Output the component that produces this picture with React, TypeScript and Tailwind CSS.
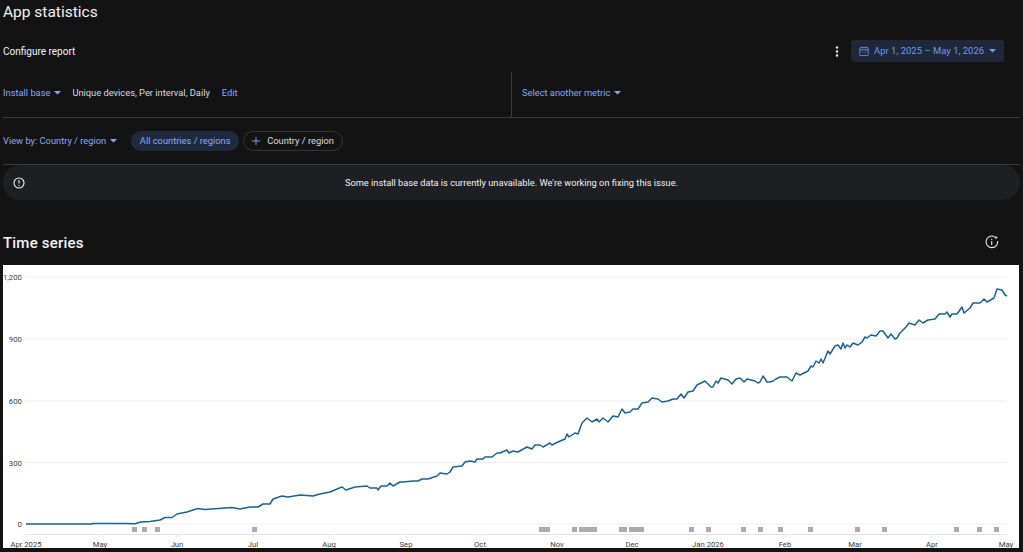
const font = { fontFamily: "Roboto, 'Liberation Sans', sans-serif" };

const linePoints = "26,524 60,524 92,524 93,523.4 125,523.5 135,523.8 141,522 150,521.5 160,520 165,517.5 172,517.5 177,514 187,512 193,510 198,508.5 205,509.5 225,508 232,507.5 240,509 250,507 258,507 263,504 270,504 273,499 282,496 288,497 300,495 313,496 320,494 330,492 342,487 346,490 355,487 367,486 370,488 377,488 378,490 381,486 387,486 390,483 393,486 400,482 403,482 413,481 418,481 422,479 428,479 437,476 440,473 447,474 450,472 453,467 462,466 465,462 470,461 475,462 477,459 483,459 485,457 492,457 497,453 500,453 507,450 509,453 513,451 518,452 527,447 532,449 535,445 540,445 543,447 550,443 552,445 558,442 565,439 567,434 569,437 575,433 578,434 582,423 587,418 592,422 597,419 599,422 603,418 608,422 613,416 618,417 622,409 625,413 630,412 633,409 638,409 642,403 648,402 652,398 658,399 662,402 668,401 673,399 677,399 681,394 684,398 688,392 693,391 697,385 705,381 711,387 713,387 716,381 718,383 721,378 728,380 732,384 736,379 740,378 744,382 747,379 755,381 758,383 760,382 763,376 767,382 770,382 773,381 776,379 780,377 787,377 792,381 796,373 800,375 808,371 811,366 813,367 816,361 819,363 821,359 823,363 828,351 830,354 835,346 838,345 841,349 843,343 845,348 847,345 850,347 853,343 858,345 862,342 865,337 867,338 871,335 876,336 880,331 883,331 888,338 891,334 895,339 897,338 900,333 906,327 909,323 915,325 919,320 923,323 928,320 935,319 939,314 945,314 947,312 950,317 952,314 957,314 962,307 964,313 970,308 973,303 980,303 984,299 987,302 994,298 997,289 1002,290 1005,295 1007,296";

const gridLines = [
  { y: 277, label: "1,200" },
  { y: 339, label: "900" },
  { y: 401, label: "600" },
  { y: 462.5, label: "300" },
  { y: 524, label: "0" },
];

const ticks = [
  { x: 26, label: "Apr 2025" },
  { x: 100, label: "May" },
  { x: 177, label: "Jun" },
  { x: 253, label: "Jul" },
  { x: 329, label: "Aug" },
  { x: 406, label: "Sep" },
  { x: 480, label: "Oct" },
  { x: 557, label: "Nov" },
  { x: 632, label: "Dec" },
  { x: 708, label: "Jan 2026" },
  { x: 785, label: "Feb" },
  { x: 855, label: "Mar" },
  { x: 932, label: "Apr" },
  { x: 1006, label: "May" },
];

const marks = [
  [132, 5], [142, 5], [155, 5], [252, 5], [539, 11], [572, 5], [579, 18], [619, 8], [629, 15],
  [689, 5], [706, 5], [741, 5], [758, 5], [778, 5], [808, 5], [855, 5], [882, 5], [954, 5], [977, 5], [994, 5],
];

function Caret({ className }: { className: string }) {
  return (
    <svg viewBox="0 0 8 4" className={`w-[7px] h-[3.5px] ${className}`} fill="currentColor">
      <path d="M0 0h8L4 4z" />
    </svg>
  );
}

function Chart() {
  return (
    <svg viewBox="3 265 1016 283" className="w-[1016px] h-[283px] block" style={font}>
      {gridLines.map((g) => (
        <g key={g.label}>
          <line x1="25" x2="1007" y1={g.y} y2={g.y} stroke="#eeeeee" strokeWidth="1" />
          <text x="22" y={g.y + 3} textAnchor="end" fontSize="7.8" fill="#3c4043">{g.label}</text>
        </g>
      ))}
      {marks.map(([x, w]) => (
        <rect key={x} x={x} y="527" width={w} height="5" fill="#ababab" />
      ))}
      <line x1="25" x2="1007" y1="534.5" y2="534.5" stroke="#e3e3ea" strokeWidth="1" />
      {ticks.map((t) => (
        <g key={t.x}>
          <line x1={t.x} x2={t.x} y1="534" y2="537" stroke="#e3e3ea" strokeWidth="1" />
          <text x={t.x} y="546.5" textAnchor="middle" fontSize="7.7" fill="#3c4043">{t.label}</text>
        </g>
      ))}
      <polyline points={linePoints} fill="none" stroke="#1a6396" strokeWidth="1.5" strokeLinejoin="round" />
    </svg>
  );
}

export default function App() {
  return (
    <div className="w-[1023px] h-[552px] overflow-hidden bg-[#131314] text-[#e8eaed] px-[3px]" style={font}>
      <h1 className="h-[24px] pt-[1px] flex items-center text-[15.5px] text-[#f1f3f4]">App statistics</h1>

      <div className="h-[48px] mt-[3px] flex items-center pr-[15px]">
        <span className="text-[10px] text-[#f1f3f4]">Configure report</span>
        <svg viewBox="0 0 4 12" className="ml-auto w-[4px] h-[11px] text-[#e8eaed]" fill="currentColor">
          <circle cx="2" cy="1.6" r="1.3" />
          <circle cx="2" cy="6" r="1.3" />
          <circle cx="2" cy="10.4" r="1.3" />
        </svg>
        <button className="ml-[12px] mr-[1px] w-[153px] h-[22px] rounded-[3px] bg-[#1f2738] text-[#6f9bf0] text-[9.5px] flex items-center pl-[8px] pr-[8px]">
          <svg viewBox="0 0 12 12" className="w-[10px] h-[10px] mr-[5px] shrink-0" fill="none" stroke="currentColor" strokeWidth="1">
            <rect x="1" y="2" width="10" height="9.5" rx="0.8" />
            <path d="M1 4.6h10M3.5 0.5v2M8.5 0.5v2M3.5 7.5h1M5.6 7.5h1M7.7 7.5h1" />
          </svg>
          <span className="whitespace-nowrap">Apr 1, 2025 – May 1, 2026</span>
          <Caret className="ml-auto" />
        </button>
      </div>

      <div className="h-[46px] mt-[-3px] flex border-b border-[#3a3b3d] text-[9.3px]">
        <div className="w-[509px] flex items-center border-r border-[#3a3b3d] pb-[3px]">
          <span className="text-[#8fa8f5]">Install base</span>
          <Caret className="ml-[4px] text-[#8fa8f5]" />
          <span className="ml-[11px] text-[#dadce0]">Unique devices, Per interval, Daily</span>
          <span className="ml-[12px] text-[#8fa8f5]">Edit</span>
        </div>
        <div className="flex items-center pl-[10px] pb-[3px]">
          <span className="text-[#8fa8f5]">Select another metric</span>
          <Caret className="ml-[4px] text-[#8fa8f5]" />
        </div>
      </div>

      <div className="h-[47px] flex items-center border-b border-[#3a3b3d] text-[9.3px]">
        <span className="text-[#8fa8f5]">View by: Country / region</span>
        <Caret className="ml-[4px] text-[#8fa8f5]" />
        <span className="ml-[14px] w-[108px] h-[20px] rounded-full bg-[#1f2a3f] text-[#8fa8f5] flex items-center justify-center">All countries / regions</span>
        <span className="ml-[4px] w-[100px] h-[20px] rounded-full border border-[#333436] text-[#dadce0] flex items-center pl-[8px]">
          <svg viewBox="0 0 8 8" className="w-[8px] h-[8px] mr-[7px] text-[#6f9bf0]" fill="none" stroke="currentColor" strokeWidth="1">
            <path d="M4 0v8M0 4h8" />
          </svg>
          Country / region
        </span>
      </div>

      <div className="h-[35px] rounded-[17px] bg-[#1e1f22] flex items-center relative text-[9.25px] text-[#f1f3f4]">
        <svg viewBox="0 0 12 12" className="absolute left-[10px] w-[12px] h-[12px]" fill="none" stroke="currentColor" strokeWidth="1.1">
          <circle cx="6" cy="6" r="5" />
          <path d="M6 3v3.6M6 8v1" />
        </svg>
        <span className="w-full text-center">Some install base data is currently unavailable. We're working on fixing this issue.</span>
      </div>

      <div className="h-[65px] flex items-center pr-[21px] pt-[21px]">
        <h2 className="text-[15px] font-medium text-[#f1f3f4] tracking-[0.2px]">Time series</h2>
        <svg viewBox="0 0 14 14" className="ml-auto w-[14px] h-[14px] mb-[2px] text-[#e8eaed]" fill="none" stroke="currentColor" strokeWidth="1.1">
          <path d="M9.5 1.7A5.8 5.8 0 1 0 12.6 6" />
          <path d="M6.7 6v4M6.7 3.8v1" />
          <path d="M11 0.4l.6 1.5 1.6.6-1.6.6-.6 1.5-.6-1.5-1.6-.6 1.6-.6z" fill="currentColor" stroke="none" />
        </svg>
      </div>

      <div className="bg-white w-[1016px] h-[283px]">
        <Chart />
      </div>
    </div>
  );
}
